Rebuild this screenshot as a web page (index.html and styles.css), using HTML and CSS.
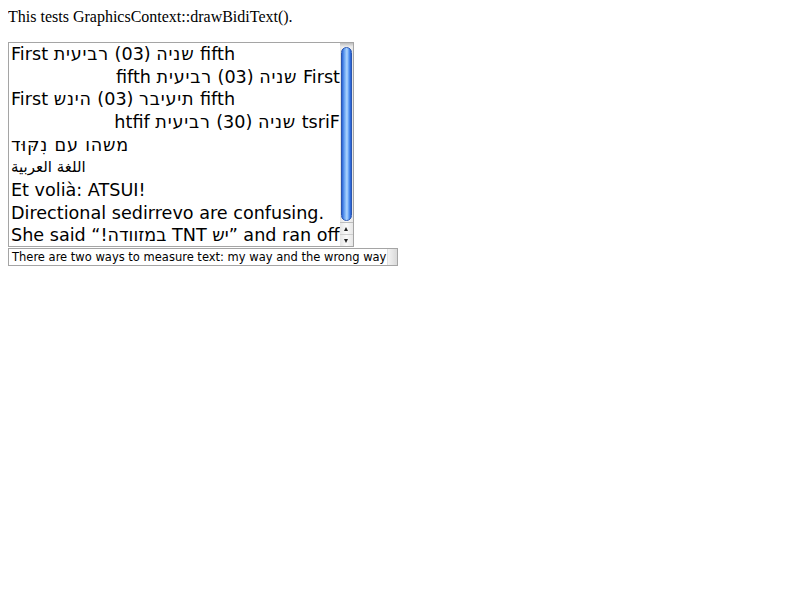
FILE: index.html
```html
<!DOCTYPE html>
<html>
<head>
<meta charset="utf-8">
<link rel="stylesheet" href="styles.css">
</head>
<body>
<div class="intro">This tests GraphicsContext::drawBidiText().</div>
<div class="listbox">
  <div class="options">
    <div class="opt">First <span class="he">שניה</span> (03) <span class="he">רביעית</span> fifth</div>
    <div class="opt" dir="rtl">First <span class="he">שניה</span> (03) <span class="he">רביעית</span> fifth</div>
    <div class="opt override">First <span class="he">שניה</span> (03) <span class="he">רביעית</span> fifth</div>
    <div class="opt override" dir="rtl">First <span class="he">שניה</span> (03) <span class="he">רביעית</span> fifth</div>
    <div class="opt"><span class="he">משהו עם נִקּוּד</span></div>
    <div class="opt arabic">اللغة العربية</div>
    <div class="opt">Et volià: ATSUI!</div>
    <div class="opt">Directional &#x202e;overrides&#x202c; are confusing.</div>
    <div class="opt">She said &#x202b;”יש TNT במזוודה!“&#x202c; and ran off</div>
  </div>
  <div class="scrollbar">
    <div class="cap"></div>
    <div class="track"><div class="thumb"></div></div>
    <div class="arrows">
      <div class="arrow up"></div>
      <div class="arrow down"></div>
    </div>
  </div>
</div>
<div class="field">
  <div class="field-text">There are two ways to measure text: my way and the wrong way</div>
  <div class="field-end"></div>
</div>
</body>
</html>
```

FILE: styles.css
```css
body {
  margin: 8px;
  font-family: "Liberation Serif", serif;
  font-size: 16px;
  color: #000;
  background: #fff;
}
.intro {
  line-height: 18px;
  height: 18px;
}
.listbox {
  margin-top: 16px;
  width: 344px;
  height: 203px;
  border: 1px solid #a5a5a5;
  display: flex;
  overflow: hidden;
}
.options {
  flex: 1;
  overflow: hidden;
  font-family: "DejaVu Sans", sans-serif;
  font-size: 17.6px;
}
.opt {
  height: 22.67px;
  line-height: 22.67px;
  padding: 0 0 0 2px;
  white-space: nowrap;
}
.opt[dir="rtl"] {
  padding: 0;
}
.he {
  letter-spacing: 0.8px;
}
.override {
  unicode-bidi: bidi-override;
}
.arabic {
  font-size: 15px;
}
.scrollbar {
  width: 13px;
  display: flex;
  flex-direction: column;
  background: linear-gradient(to right, #e6e6e6, #fafafa 50%, #e6e6e6);
}
.cap {
  height: 4px;
  background: linear-gradient(#bdbdbd, #eeeeee);
}
.track {
  flex: 1;
  padding: 0 1px;
}
.thumb {
  height: 174px;
  border-radius: 6px;
  background: linear-gradient(to right, #2a63d6, #6fa9f5 30%, #b0d6fd 55%, #4d8ff0 80%, #2459cc);
  border: 1px solid #2a56b0;
  box-sizing: border-box;
}
.arrows {
  height: 23px;
  border-top: 1px solid #bdbdbd;
  display: flex;
  flex-direction: column;
}
.arrow {
  flex: 1;
  position: relative;
}
.arrow.up {
  border-bottom: 1px solid #cfcfcf;
}
.arrow::after {
  content: "";
  position: absolute;
  left: 4px;
  top: 4px;
  border-left: 2.5px solid transparent;
  border-right: 2.5px solid transparent;
}
.arrow.up::after {
  border-bottom: 4px solid #222;
}
.arrow.down::after {
  border-top: 4px solid #222;
}
.field {
  margin-top: 1px;
  width: 388px;
  height: 16px;
  border: 1px solid #a5a5a5;
  display: flex;
  overflow: hidden;
}
.field-text {
  flex: 1;
  font-family: "DejaVu Sans", sans-serif;
  font-size: 11.5px;
  line-height: 16px;
  padding-left: 3px;
  white-space: nowrap;
  overflow: hidden;
}
.field-end {
  width: 9px;
  background: linear-gradient(to right, #f3f3f3, #d9d9d9);
  border-left: 1px solid #e0e0e0;
}
```
